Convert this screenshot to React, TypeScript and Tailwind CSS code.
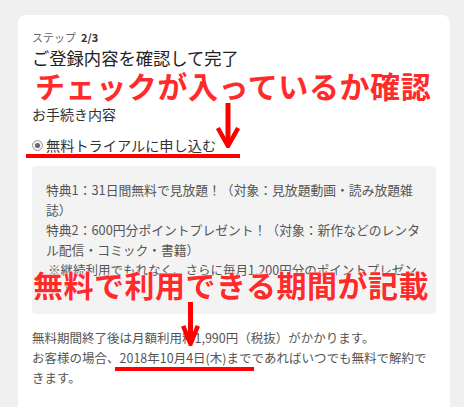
import React from 'react';

const jp = "font-['Noto_Sans_CJK_JP','Noto_Sans',sans-serif]";

function Arrow({ className, w, h }: { className: string; w: number; h: number }) {
  const mid = w / 2;
  return (
    <svg className={className} width={w} height={h} viewBox={`0 0 ${w} ${h}`}>
      <line x1={mid} y1={0} x2={mid} y2={h - 3} stroke="#ff0000" strokeWidth={5} />
      <polyline
        points={`${3},${h - 18} ${mid},${h - 2} ${w - 3},${h - 18}`}
        fill="none"
        stroke="#ff0000"
        strokeWidth={4.5}
        strokeLinecap="square"
      />
    </svg>
  );
}

export default function App() {
  return (
    <div className={`relative min-h-screen w-full overflow-hidden bg-[#f0f0f0] pt-[15px] pl-[18px] pr-[14px] ${jp}`}>
      <div className="min-h-[420px] rounded-lg bg-white px-[14px] pt-[14px] text-[#333]">
        <div className="flex items-baseline gap-[5px] text-[11px] leading-[16px]">
          <span className="text-[#666]">ステップ</span>
          <span className="font-bold text-[#333]">2/3</span>
        </div>
        <h1 className="mt-[1px] text-[17.3px] leading-[24px] text-[#222]">ご登録内容を確認して完了</h1>

        <div className="mt-[34px] text-[14px] leading-[20px] text-[#333]">お手続き内容</div>

        <div className="mt-[11px] flex items-center gap-[3px] text-[14.2px] leading-[20px]">
          <span className="flex h-[11px] w-[11px] items-center justify-center rounded-full border border-[#999] bg-[#eee]">
            <span className="h-[5px] w-[5px] rounded-full bg-[#666]" />
          </span>
          <span className="text-[#333]">無料トライアルに申し込む</span>
        </div>

        <div className="mt-[11px] rounded bg-[#f3f3f3] px-[14px] py-[14px] text-[12.8px] leading-[20px] text-[#555]">
          <p>特典1：31日間無料で見放題！（対象：見放題動画・読み放題雑誌）</p>
          <p>特典2：600円分ポイントプレゼント！（対象：新作などのレンタル配信・コミック・書籍）</p>
          <p className="pl-[2px] text-[12.5px]">※継続利用でもれなく、さらに毎月1,200円分のポイントプレゼント！</p>
        </div>

        <div className="mt-[14px] text-[12.5px] leading-[20px] text-[#555]">
          <p>無料期間終了後は月額利用料1,990円（税抜）がかかります。</p>
          <p>お客様の場合、2018年10月4日(木)までであればいつでも無料で解約できます。</p>
        </div>
      </div>

      {/* annotations drawn over the screenshot */}
      <div className="absolute left-[35px] top-[68px] whitespace-nowrap text-[30px] leading-[34px] font-bold tracking-[0.6px] text-[#ff2b2b] [text-shadow:0_0_2px_#fff,0_0_2px_#fff]">
        チェックが入っているか確認
      </div>
      <Arrow className="absolute left-[216px] top-[103px]" w={24} h={45} />
      <div className="absolute left-[26px] top-[154px] h-[4px] w-[214px] bg-[#ff0000]" />

      <div className="absolute left-[33px] top-[267px] whitespace-nowrap text-[30px] leading-[34px] font-bold tracking-[0.5px] text-[#ff2b2b] [text-shadow:0_0_2px_#fff,0_0_2px_#fff]">
        無料で利用できる期間が記載
      </div>
      <Arrow className="absolute left-[181px] top-[302px]" w={19} h={44} />
      <div className="absolute left-[115px] top-[367px] h-[4px] w-[139px] bg-[#ff0000]" />
    </div>
  );
}
